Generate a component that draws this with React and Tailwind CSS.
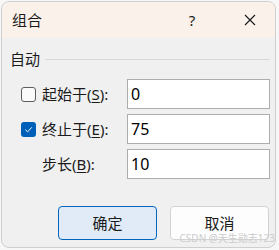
const font = { fontFamily: '"Noto Sans", "Noto Sans CJK SC", sans-serif' };

const Row = ({ label, hot, rest, value, checkbox, checked }) => (
  <div className="flex items-center h-[30px]">
    <div className="w-[40px] flex justify-end pr-[6px]">
      {checkbox && (
        <span
          className={
            checked
              ? "w-[15px] h-[15px] rounded-[3px] bg-[#005fb8] flex items-center justify-center"
              : "w-[15px] h-[15px] rounded-[3px] border border-[#5e5e5e] bg-[#fbfbfb]"
          }
        >
          {checked && (
            <svg width="9" height="9" viewBox="0 0 10 10" fill="none">
              <path d="M1.5 5.2 L4 7.6 L8.6 2.6" stroke="white" strokeWidth="1.1" />
            </svg>
          )}
        </span>
      )}
    </div>
    <div className="w-[85px] text-[15px] leading-[20px] text-[#1a1a1a]">
      {label}(<span className="underline underline-offset-2">{hot}</span>){rest}
    </div>
    <div className="w-[143px] h-[30px] border border-[#adadad] bg-white flex items-center pl-[3px] text-[16px] text-black">
      {value}
    </div>
  </div>
);

export default function App() {
  return (
    <div className="w-[279px] h-[250px] bg-[#f7f7f7] pt-[1px] pl-[1px]" style={font}>
      <div className="relative w-[275px] h-[247px] rounded-[8px] border border-[#cfcfcf] bg-[#f0f0f0] overflow-hidden flex flex-col">
        <div className="h-[36px] bg-[#f9f1ea] flex items-center pl-[10px] text-[15px] text-[#1a1a1a] shrink-0">
          <span>组合</span>
          <span className="ml-auto w-[20px] text-center mr-[42px]">?</span>
          <svg className="mr-[19px]" width="12" height="12" viewBox="0 0 12 12">
            <path d="M1 1 L11 11 M11 1 L1 11" stroke="#1a1a1a" strokeWidth="1.1" />
          </svg>
        </div>

        <div className="flex items-center mt-[11px] pl-[8px] pr-[5px]">
          <span className="text-[15px] leading-[20px] text-[#1a1a1a]">自动</span>
          <div className="flex-1 h-px bg-[#d8d8d8] ml-[5px]" />
        </div>

        <div className="flex flex-col gap-[5px] mt-[10px]">
          <Row label="起始于" hot="S" rest=":" value="0" checkbox />
          <Row label="终止于" hot="E" rest=":" value="75" checkbox checked />
          <Row label="步长" hot="B" rest=":" value="10" />
        </div>

        <div className="flex gap-[13px] mt-[27px] pl-[56px]">
          <button className="w-[99px] h-[34px] rounded-[4px] border border-[#0067c0] bg-[#e0ebf7] text-[15px] text-[#1a1a1a]">
            确定
          </button>
          <button className="w-[99px] h-[34px] rounded-[4px] border border-[#d3d3d3] bg-[#fdfdfd] text-[15px] text-[#1a1a1a]">
            取消
          </button>
        </div>

        <div className="absolute right-[0px] bottom-[1px] text-[10px] text-[#cccccc]">
          CSDN @天生勋志123
        </div>
      </div>
    </div>
  );
}
